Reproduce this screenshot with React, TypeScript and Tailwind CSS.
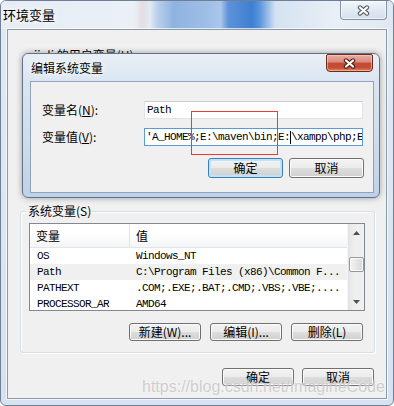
import React from "react";

const cjk = "font-['Noto_Sans_CJK_SC',sans-serif]";
const mono = "font-['Liberation_Mono','Noto_Sans_CJK_SC',monospace] text-[11px] tracking-[-0.6px]";

const SYS_VARS = [
    { name: "OS", value: "Windows_NT" },
    { name: "Path", value: "C:\\Program Files (x86)\\Common F..." },
    { name: "PATHEXT", value: ".COM;.EXE;.BAT;.CMD;.VBS;.VBE;...." },
    { name: "PROCESSOR_AR", value: "AMD64" },
];

function CloseGlyph({ outline }: { outline: string }) {
    return (
        <svg width="13" height="11" viewBox="0 0 13 11">
            <path d="M3 2.5L10 8.5M10 2.5L3 8.5" stroke={outline} strokeWidth="4.4" strokeLinecap="round" />
            <path d="M3 2.5L10 8.5M10 2.5L3 8.5" stroke="#ffffff" strokeWidth="2.2" strokeLinecap="round" />
        </svg>
    );
}

function WinButton({ label, focused, size }: { label: string; focused?: boolean; size: string }) {
    const look = focused
        ? "border-[#3c7fb1] shadow-[inset_0_0_0_2px_#bfe3fa]"
        : "border-[#707070] shadow-[inset_0_0_0_1px_#fbfbfb]";
    return (
        <div
            className={`${size} ${look} ${cjk} flex items-center justify-center rounded-[3px] border bg-[linear-gradient(180deg,#f3f3f3_0%,#ebebeb_50%,#dddddd_51%,#d0d0d0_100%)] text-[12px] leading-none text-black`}
        >
            {label}
        </div>
    );
}

function Arrow({ up }: { up?: boolean }) {
    return (
        <div className="flex h-[17px] w-full items-center justify-center">
            <svg width="7" height="4" viewBox="0 0 7 4">
                <path d={up ? "M0 4L3.5 0L7 4Z" : "M0 0L3.5 4L7 0Z"} fill="#505050" />
            </svg>
        </div>
    );
}

function SysVarList() {
    return (
        <div className="ml-[8px] flex h-[88px] w-[336px] overflow-hidden border border-[#828790] bg-white">
            <div className="flex-1 overflow-hidden">
                <div className="flex h-[24px] items-center border-b border-[#e5e5e5] bg-[linear-gradient(180deg,#ffffff_0%,#ffffff_40%,#f4f5f7_100%)] text-[12px] text-black">
                    <span className={`${cjk} w-[99px] pl-[6px]`}>变量</span>
                    <span className="h-full w-px bg-[#e3e3e3]" />
                    <span className={`${cjk} pl-[6px]`}>值</span>
                </div>
                {SYS_VARS.map((v, i) => (
                    <div
                        key={v.name}
                        className={`flex h-[16px] items-center whitespace-nowrap text-black ${mono} ${i === 1 ? "bg-[#f0f0f0]" : ""}`}
                    >
                        <span className="w-[100px] pl-[7px]">{v.name}</span>
                        <span className="pl-[6px]">{v.value}</span>
                    </div>
                ))}
            </div>
            <div className="flex w-[17px] flex-col items-center border-l border-[#f4f4f4] bg-[linear-gradient(90deg,#e3e3e3_0%,#eeeeee_35%,#f0f0f0_100%)]">
                <Arrow up />
                <div className="mt-[16px] h-[15px] w-[15px] rounded-[2px] border border-[#979797] bg-[linear-gradient(90deg,#f4f4f4_0%,#e6e6e6_50%,#d8d8d8_100%)] shadow-[inset_0_0_0_1px_#fafafa]" />
                <div className="flex-1" />
                <Arrow />
            </div>
        </div>
    );
}

function EditDialog() {
    return (
        <div className="absolute left-[21px] top-[52px] flex h-[145px] w-[358px] flex-col rounded-[6px] border border-[#627387] bg-[linear-gradient(180deg,#e9eff6_0%,#dae5f1_20%,#cbdaeb_70%,#bdd1e8_100%)] shadow-[0_0_6px_rgba(0,0,0,0.35)]">
            <div className="flex h-[27px] items-start justify-between">
                <span className={`${cjk} pl-[8px] pt-[7px] text-[12px] leading-[13px] text-black [text-shadow:0_0_5px_#fff,0_0_8px_#fff]`}>
                    编辑系统变量
                </span>
                <div className="mr-[6px] flex h-[18px] w-[47px] items-center justify-center rounded-b-[4px] rounded-t-[2px] border border-[#6b2a20] bg-[linear-gradient(180deg,#e8b0a6_0%,#d9887a_45%,#c24a36_50%,#c74e33_80%,#e08a5a_100%)] shadow-[inset_0_0_0_1px_rgba(255,220,210,0.5)]">
                    <CloseGlyph outline="#5a241b" />
                </div>
            </div>
            <div className="ml-[7px] mr-[5px] flex h-[112px] flex-col border border-[#8fa3ba] bg-[#f0f0f0]">
                <div className="mt-[19px] flex h-[18px] items-center">
                    <span className={`${cjk} w-[113px] pl-[11px] text-[12px] text-black`}>变量名(<span className="underline">N</span>):</span>
                    <div className={`${mono} flex h-[18px] w-[219px] items-center border border-[#e2e3ea] border-t-[#c9ccd3] bg-white pl-[2px] text-black`}>
                        Path
                    </div>
                </div>
                <div className="mt-[9px] flex h-[18px] items-center">
                    <span className={`${cjk} w-[113px] pl-[11px] text-[12px] text-black`}>变量值(<span className="underline">V</span>):</span>
                    <div className={`${mono} flex h-[18px] w-[219px] items-center overflow-hidden whitespace-nowrap border border-[#5b9bd5] bg-white pl-[1px] text-black`}>
                        'A_HOME%;E:\maven\bin;E:
                        <span className="inline-block h-[13px] w-0 border-l border-black" />
                        \xampp\php;E:\
                    </div>
                </div>
                <div className="mt-[12px] flex justify-end gap-[6px] pr-[9px]">
                    <WinButton label="确定" focused size="h-[20px] w-[75px]" />
                    <WinButton label="取消" size="h-[20px] w-[75px]" />
                </div>
            </div>
        </div>
    );
}

export default function App() {
    return (
        <div className="relative h-[406px] w-[394px] overflow-hidden rounded-[6px] border border-[#6f8096] bg-[linear-gradient(180deg,#e2eaf3_0%,#d6e2ef_100%)]">
            <div className="flex h-[28px] items-start justify-between bg-[linear-gradient(90deg,#e6edf5_0%,#eaf0f6_34%,#e4dde4_36%,#e2eaf3_38%,#b9cfea_40%,#8fb3e0_44%,#9dbde6_52%,#aac6ea_56%,#5d92d8_58%,#3f7fd2_64%,#5b94dc_66%,#d3e2f2_70%,#e9eff6_85%,#dfe8f2_100%)]">
                <span className={`${cjk} pl-[2px] pt-[7px] text-[13px] leading-[14px] text-black [text-shadow:0_0_5px_#fff,0_0_9px_#fff]`}>
                    环境变量
                </span>
                <div className="mr-[6px] flex h-[19px] w-[47px] items-center justify-center rounded-b-[4px] border border-t-0 border-[#8593a4] bg-[linear-gradient(180deg,rgba(255,255,255,0.55)_0%,rgba(225,233,242,0.6)_50%,rgba(205,217,231,0.7)_100%)] shadow-[inset_0_0_0_1px_rgba(255,255,255,0.6)]">
                    <CloseGlyph outline="#5c6470" />
                </div>
            </div>

            <div className="mx-[6px] flex h-[370px] flex-col border border-[#8a99ab] bg-[#f0f0f0] shadow-[0_0_0_1px_rgba(255,255,255,0.7)]">
                <div className={`${cjk} ml-[26px] mt-[19px] h-[12px] text-[12px] leading-[12px] text-black`}>
                    jiali 的用户变量(U)
                </div>

                <fieldset className="ml-[12px] mr-[11px] mt-[144px] h-[148px] rounded-[3px] border border-[#d5dfe5] shadow-[inset_1px_1px_0_#fff,1px_1px_0_#fff]">
                    <legend className={`${cjk} ml-[6px] px-[1px] text-[12px] leading-[12px] text-black`}>系统变量(S)</legend>
                    <div className="mt-[6px]">
                        <SysVarList />
                    </div>
                    <div className="mt-[12px] flex justify-end gap-[9px] pr-[11px]">
                        <WinButton label="新建(W)..." size="h-[18px] w-[72px]" />
                        <WinButton label="编辑(I)..." size="h-[18px] w-[72px]" />
                        <WinButton label="删除(L)" size="h-[18px] w-[72px]" />
                    </div>
                </fieldset>

                <div className="mr-[12px] mt-[15px] flex justify-end gap-[8px]">
                    <WinButton label="确定" size="h-[18px] w-[72px]" />
                    <WinButton label="取消" size="h-[18px] w-[72px]" />
                </div>
            </div>

            <EditDialog />

            <div className="absolute left-[190px] top-[110px] h-[44px] w-[87px] border border-[#f03838]" />

            <div className="absolute left-[141px] top-[376px] font-['Liberation_Sans',sans-serif] text-[16px] leading-[20px] text-[rgba(190,190,190,0.75)] [text-shadow:0_0_2px_rgba(255,255,255,0.9)]">
                https://blog.csdn.net/ImagineCode
            </div>
        </div>
    );
}
